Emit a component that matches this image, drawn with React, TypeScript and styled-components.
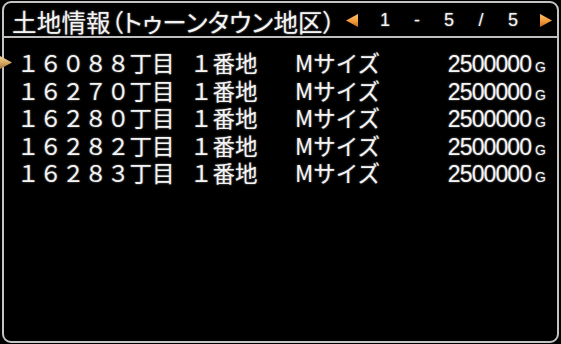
import { FC } from 'react'
import styled, { createGlobalStyle } from 'styled-components'

const GlobalStyle = createGlobalStyle`
  html, body {
    margin: 0;
    padding: 0;
    background: #000;
  }
  body {
    font-family: "Noto Sans CJK JP", "Noto Sans", sans-serif;
    color: #f4f4f4;
  }
`

const Window = styled.div`
  box-sizing: border-box;
  width: 557px;
  height: 342px;
  margin: 1px 0 0 2px;
  border: 2px solid #c4c4c4;
  border-radius: 9px;
  background: #000;
  display: flex;
  flex-direction: column;
`

const Header = styled.div`
  height: 33px;
  display: flex;
  align-items: center;
  border-bottom: 2px solid #bfbfbf;
  padding: 0 0 0 8px;
`

const Title = styled.div`
  flex: 0 1 auto;
  min-width: 0;
  font-size: 24.5px;
  line-height: 33px;
  font-feature-settings: "palt";
  letter-spacing: 0.2px;
  text-shadow: 0 0 2px rgba(255, 255, 255, 0.55);
  white-space: nowrap;
  margin-top: 4px;
`

const Pager = styled.div`
  margin-left: auto;
  display: flex;
  align-items: center;
  margin-top: 2px;
`

const PagerCell = styled.span`
  width: 32px;
  display: flex;
  justify-content: center;
  align-items: center;
  font-family: "Liberation Sans", Arial, sans-serif;
  font-size: 18px;
  text-shadow: 0 0 2px rgba(255, 255, 255, 0.55);
`

const ArrowCell = styled.span<{ side: 'left' | 'right' }>`
  width: 20px;
  display: flex;
  justify-content: center;
  align-items: center;
  margin: ${p => (p.side === 'left' ? '0 7px' : '0 1px 0 7px')};
`

const Arrow = styled.span<{ dir: 'left' | 'right' }>`
  display: block;
  width: 12px;
  height: 13px;
  background: linear-gradient(180deg, #ffc26a 0%, #f19a3a 55%, #c86a1c 100%);
  clip-path: ${p => (p.dir === 'left' ? 'polygon(100% 0, 0 50%, 100% 100%)' : 'polygon(0 0, 100% 50%, 0 100%)')};
`

const List = styled.div`
  position: relative;
  padding-top: 11px;
`

const Row = styled.div`
  position: relative;
  display: grid;
  grid-template-columns: 173px 105px 1fr auto auto;
  align-items: baseline;
  padding: 0 11px 0 13px;
  height: 27.5px;
  line-height: 27.5px;
  font-size: 22.5px;
  text-shadow: 0 0 2px rgba(255, 255, 255, 0.55);
  white-space: nowrap;
`

const Cursor = styled.span`
  position: absolute;
  left: -4px;
  top: 7px;
  width: 12px;
  height: 13px;
  background: linear-gradient(180deg, #f3d79a 0%, #d7ab62 50%, #9c7238 100%);
  clip-path: polygon(0 0, 100% 50%, 0 100%);
`

const Price = styled.span`
  font-family: "Liberation Sans", Arial, sans-serif;
  font-size: 23px;
  letter-spacing: -0.9px;
  text-align: right;
`

const Unit = styled.span`
  font-family: "Liberation Sans", Arial, sans-serif;
  font-size: 14px;
  margin-left: 4px;
`

interface Lot {
  address: string
  lot: string
  size: string
  price: string
}

const lots: Lot[] = [
  { address: '１６０８８丁目', lot: '１番地', size: 'Mサイズ', price: '2500000' },
  { address: '１６２７０丁目', lot: '１番地', size: 'Mサイズ', price: '2500000' },
  { address: '１６２８０丁目', lot: '１番地', size: 'Mサイズ', price: '2500000' },
  { address: '１６２８２丁目', lot: '１番地', size: 'Mサイズ', price: '2500000' },
  { address: '１６２８３丁目', lot: '１番地', size: 'Mサイズ', price: '2500000' },
]

const App: FC = () => {
  const selected = 0
  return (
    <>
      <GlobalStyle />
      <Window>
        <Header>
          <Title>土地情報（トゥーンタウン地区）</Title>
          <Pager>
            <ArrowCell side="left"><Arrow dir="left" /></ArrowCell>
            <PagerCell>1</PagerCell>
            <PagerCell>-</PagerCell>
            <PagerCell>5</PagerCell>
            <PagerCell>/</PagerCell>
            <PagerCell>5</PagerCell>
            <ArrowCell side="right"><Arrow dir="right" /></ArrowCell>
          </Pager>
        </Header>
        <List>
          {lots.map((l, i) => (
            <Row key={i}>
              {i === selected ? <Cursor /> : ''}
              <span>{l.address}</span>
              <span>{l.lot}</span>
              <span>{l.size}</span>
              <Price>{l.price}</Price>
              <Unit>G</Unit>
            </Row>
          ))}
        </List>
      </Window>
    </>
  )
}

export default App
